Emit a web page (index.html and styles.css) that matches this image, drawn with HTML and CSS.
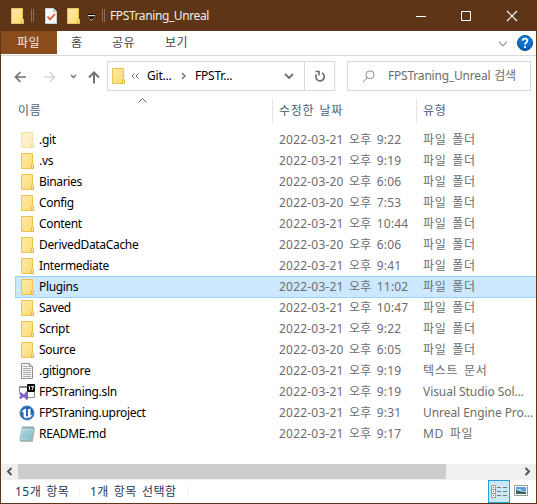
FILE: index.html
```html
<!DOCTYPE html>
<html lang="ko">
<head>
<meta charset="utf-8">
<title>FPSTraning_Unreal</title>
<link rel="stylesheet" href="styles.css">
</head>
<body>
<svg class="defs" width="0" height="0" aria-hidden="true">
  <defs>
    <linearGradient id="fg" x1="0" y1="0" x2="1" y2="1"><stop offset="0" stop-color="#ffeaa6"/><stop offset="1" stop-color="#fedb72"/></linearGradient>
    <linearGradient id="ng" x1="0" y1="0" x2="1" y2="1"><stop offset="0" stop-color="#d3eef3"/><stop offset="1" stop-color="#7fbccb"/></linearGradient>
    <linearGradient id="hg" x1="0" y1="0" x2="0" y2="1"><stop offset="0" stop-color="#1583e0"/><stop offset="1" stop-color="#0560bd"/></linearGradient>
    <symbol id="folder" viewBox="0 0 13 16">
      <path d="M.5.5h11v11h1v4H.5z" fill="url(#fg)" stroke="#eac44f"/>
      <path d="M10.500 15.500v-4l1-1 1 1v4z" fill="#ffe596" stroke="#e5b93c"/>
    </symbol>
  </defs>
</svg>
<div class="window">
  <header class="titlebar">
    <svg class="folder" width="13" height="16"><use href="#folder"/></svg>
    <i class="grip grip-a"></i>
    <svg class="check" width="12" height="16" viewBox="0 0 12 16"><path d="M.5.5h8l3 3v12H.5z" fill="#fafafa" stroke="#c9d3da"/><path d="M8.500.5v3h3" fill="#dde5ea" stroke="#b7c4cc"/><path d="M2.500 8.500l2.500 3 5-5.500" fill="none" stroke="#e2572b" stroke-width="1.800"/></svg>
    <svg class="folder qa" width="13" height="16"><use href="#folder"/></svg>
    <svg class="more" width="7" height="7" viewBox="0 0 7 7"><path d="M0 .5h7" stroke="#000"/><path d="M0 1.500h7" stroke="#e8ddd5"/><path d="M0 3h7L3.500 6.800z" fill="#e8ddd5"/><path d="M0 3h7L3.500 5.800z" fill="#000"/></svg>
    <i class="grip grip-b"></i>
    <span class="title">FPSTraning_Unreal</span>
    <svg class="controls" width="102" height="12" viewBox="0 0 102 12" fill="none" stroke="#fff"><path d="M0 6.500h10M45.500 1.500h9v9h-9z"/><path d="M91 1l10 10M101 1L91 11" stroke-width="1.200"/></svg>
  </header>
  <nav class="tabs">
    <span class="tab file">파일</span><span class="tab home">홈</span><span class="tab share">공유</span><span class="tab view">보기</span>
    <svg class="expand" width="10" height="6" viewBox="0 0 10 6"><path d="M1 .8l4 4 4-4" fill="none" stroke="#a0a0a0" stroke-width="1.300"/></svg>
    <svg class="help" width="16" height="16" viewBox="0 0 16 16"><circle cx="8" cy="8" r="7.500" fill="url(#hg)" stroke="#0b4c8c"/><path d="M5.600 5.700C5.700 2.800 10.500 2.900 10.300 5.800 10.200 7.500 8 7.600 8 9.700M8 11v2" fill="none" stroke="#fff" stroke-width="1.800"/></svg>
  </nav>
  <div class="navbar">
    <svg class="arrows" width="86" height="14" viewBox="0 0 86 14" fill="none" stroke="#727272" stroke-width="1.700"><path d="M12 7H1.500M6.500 2l-5 5 5 5"/><path d="M30 7h10.500M35.500 2l5 5-5 5" stroke="#d8d8d8"/><path d="M57 5l2.500 2.500L62 5" stroke-width="1.500"/><path d="M80 13.500V2.500M75 7.500l5-5 5 5" stroke-width="2"/></svg>
    <div class="address">
      <svg class="folder" width="13" height="16"><use href="#folder"/></svg>
      <svg class="dbl" width="8" height="6" viewBox="0 0 8 6"><path d="M3.500.5L1 3l2.500 2.500M7.500.5L5 3l2.500 2.500" fill="none" stroke="#666"/></svg>
      <span class="crumb git">Git...</span>
      <svg class="sep" width="5" height="8" viewBox="0 0 5 8"><path d="M1 1l3 3-3 3" fill="none" stroke="#777" stroke-width="1.500"/></svg>
      <span class="crumb">FPSTr...</span>
      <svg class="drop" width="10" height="7" viewBox="0 0 10 7"><path d="M1 1l4 4 4-4" fill="none" stroke="#707070" stroke-width="1.900"/></svg>
      <span class="refresh"><svg width="12" height="12" viewBox="0 0 12 12" fill="none" stroke="#6c6c6c" stroke-width="1.600"><path d="M8 3A4.200 4.200 0 1 1 2.500 4.500M1.500 1.500H5v4"/></svg></span>
    </div>
    <div class="search">
      <svg width="13" height="13" viewBox="0 0 13 13" fill="none" stroke="#8c8c8c"><circle cx="8" cy="4.800" r="4"/><path d="M5.200 7.700L.7 12.200"/></svg>
      <span>FPSTraning_Unreal 검색</span>
    </div>
  </div>
  <div class="columns">
    <span class="c-name">이름</span><span class="c-date">수정한 날짜</span><span class="c-type">유형</span>
    <svg class="sort" width="9" height="5" viewBox="0 0 9 5"><path d="M.5 4.500l4-4 4 4" fill="none" stroke="#666"/></svg>
  </div>
  <main class="files">
    <div class="row"><svg class="icon faded" viewBox="0 0 13 16"><use href="#folder"/></svg><span class="name">.git</span><span class="date">2022-03-21 오후 9:22</span><span class="type ko">파일 폴더</span></div>
    <div class="row"><svg class="icon" viewBox="0 0 13 16"><use href="#folder"/></svg><span class="name">.vs</span><span class="date">2022-03-21 오후 9:19</span><span class="type ko">파일 폴더</span></div>
    <div class="row"><svg class="icon" viewBox="0 0 13 16"><use href="#folder"/></svg><span class="name">Binaries</span><span class="date">2022-03-20 오후 6:06</span><span class="type ko">파일 폴더</span></div>
    <div class="row"><svg class="icon" viewBox="0 0 13 16"><use href="#folder"/></svg><span class="name">Config</span><span class="date">2022-03-20 오후 7:53</span><span class="type ko">파일 폴더</span></div>
    <div class="row"><svg class="icon" viewBox="0 0 13 16"><use href="#folder"/></svg><span class="name">Content</span><span class="date">2022-03-21 오후 10:44</span><span class="type ko">파일 폴더</span></div>
    <div class="row"><svg class="icon" viewBox="0 0 13 16"><use href="#folder"/></svg><span class="name">DerivedDataCache</span><span class="date">2022-03-20 오후 6:06</span><span class="type ko">파일 폴더</span></div>
    <div class="row"><svg class="icon" viewBox="0 0 13 16"><use href="#folder"/></svg><span class="name">Intermediate</span><span class="date">2022-03-21 오후 9:41</span><span class="type ko">파일 폴더</span></div>
    <div class="row selected"><svg class="icon" viewBox="0 0 13 16"><use href="#folder"/></svg><span class="name">Plugins</span><span class="date">2022-03-21 오후 11:02</span><span class="type ko">파일 폴더</span></div>
    <div class="row"><svg class="icon" viewBox="0 0 13 16"><use href="#folder"/></svg><span class="name">Saved</span><span class="date">2022-03-21 오후 10:47</span><span class="type ko">파일 폴더</span></div>
    <div class="row"><svg class="icon" viewBox="0 0 13 16"><use href="#folder"/></svg><span class="name">Script</span><span class="date">2022-03-21 오후 9:22</span><span class="type ko">파일 폴더</span></div>
    <div class="row"><svg class="icon" viewBox="0 0 13 16"><use href="#folder"/></svg><span class="name">Source</span><span class="date">2022-03-20 오후 6:05</span><span class="type ko">파일 폴더</span></div>
    <div class="row"><svg class="icon" viewBox="0 0 13 16"><path d="M.5.5h8l3 3v12H.5z" fill="#f7f7f7" stroke="#919191"/><path d="M8.500.5v3h3" fill="#ddd" stroke="#919191"/><path d="M2 3.500h5M2 5.500h8M2 7.500h8M2 9.500h8M2 11.500h8M2 13.500h8" stroke="#aaa"/></svg><span class="name">.gitignore</span><span class="date">2022-03-21 오후 9:19</span><span class="type ko">텍스트 문서</span></div>
    <div class="row"><svg class="icon wide" viewBox="0 0 16 16"><path d="M.5 8V2.500H8M15.500 8v5.500H9M1 3.500h7" fill="none" stroke="#8c8c8c"/><rect x="8" y="0" width="8" height="8" rx="1" fill="#050505"/><path d="M9.500 2.500h1V6M12 2.500h2.500L13 6" fill="none" stroke="#fff"/><path d="M0 9l1.500-1L5 10.500 7.500 7 9 8v7l-1.500 1L5 13l-3.500 2L0 14l1.500-2.500z" fill="#8661c5"/></svg><span class="name">FPSTraning.sln</span><span class="date">2022-03-21 오후 9:19</span><span class="type">Visual Studio Sol...</span></div>
    <div class="row"><svg class="icon wide" viewBox="0 0 16 16"><circle cx="8" cy="8" r="7.200" fill="#2466b0" stroke="#6e9fd2" stroke-width=".7"/><path d="M2.700 7.500C3.500 5.200 5.200 4 7 3.500v7q0 1 1 1t1-1V5L8.300 4.500 11.500 3.500v7l2-1.500C12.600 11.500 11.500 12.500 10 13L9 12.200 8 13.300C6.500 13.300 4.500 12.500 4.500 11V7q-.8-.4-1.800.5" fill="#fff"/></svg><span class="name">FPSTraning.uproject</span><span class="date">2022-03-21 오후 9:31</span><span class="type">Unreal Engine Pro...</span></div>
    <div class="row"><svg class="icon wide" viewBox="0 0 16 16"><path d="M13.500 2L15.500 3 13.500 15.500H2z" fill="#e2d6b5" stroke="#998f77" stroke-width=".6"/><path d="M3 1.500h12L12.500 14.500H.7z" fill="url(#ng)" stroke="#78a9b4" stroke-width=".6"/><path d="M3.500 5h9.500M3 7h9.500M2.800 9h9.300M2.500 11h9.300" stroke="#74aebd" stroke-width=".6"/><path d="M4 0v3M6 0v3M8 0v3M10 0v3M12 0v3M14 0v3" stroke="#7a8d92" stroke-width=".8"/></svg><span class="name">README.md</span><span class="date">2022-03-21 오후 9:17</span><span class="type ko">MD 파일</span></div>
  </main>
  <div class="scrollbar">
    <svg class="left" width="17" height="15" viewBox="0 0 17 15"><path d="M10.500 4L7 7.500l3.500 3.500" fill="none" stroke="#555" stroke-width="2"/></svg>
    <i class="thumb"></i>
    <svg class="right" width="17" height="15" viewBox="0 0 17 15"><path d="M6.500 4L10 7.500 6.500 11" fill="none" stroke="#555" stroke-width="2"/></svg>
  </div>
  <footer class="status">
    <span class="count">15개 항목</span><span class="picked">1개 항목 선택함</span>
    <span class="details"><svg width="16" height="13" viewBox="0 0 16 13" fill="none" stroke="#999"><path d="M.5.5h4v12h-4zM0 4.500h5M0 8.500h5" fill="#fff"/><path d="M6 2.500h4M12 2.500h4M6 6.500h4M12 6.500h4M6 10.500h4M12 10.500h4" stroke="#777"/><path d="M2 2.500h1" stroke="#555"/><path d="M2 6.500h1" stroke="#387abf"/><path d="M2 10.500h1" stroke="#d22"/></svg></span>
    <svg class="thumbs" width="14" height="11" viewBox="0 0 14 11"><path d="M.5.5h13v10H.5z" fill="#fff" stroke="#999"/><path d="M2 2h10v7H2z" fill="#5b9be8"/><path d="M2 5q3-2 5 0t5 1v1H2z" fill="#cfe6f5"/><path d="M2 5q3 0 5 1.500l5 .5v2H2z" fill="#38695b"/></svg>
  </footer>
</div>
</body>
</html>
```

FILE: styles.css
```css
* { box-sizing: border-box; }
body { margin: 0; background: #fff; font: 12px/20px "Noto Sans", "Noto Sans CJK KR", sans-serif; color: #000; overflow: hidden; }
svg { display: block; flex: none; }
span { white-space: nowrap; }
.defs { position: absolute; }
.window { width: 537px; height: 504px; border: solid #5f3517; border-width: 0 1px 1px; display: flex; flex-direction: column; }

.titlebar { height: 31px; margin: 0 -1px; flex: none; background: #5f3517; display: flex; align-items: center; padding: 0 19px 0 11px; color: #f4eeea; }
.grip { width: 3px; height: 13px; border: solid #8d705c; border-width: 0 1px; }
.grip-a { margin-left: 7px; }
.check { margin: 1px 0 0 11px; }
.qa { margin: 1px 0 0 10px; }
.more { margin: 3px 0 0 8px; }
.grip-b { margin-left: 7px; }
.title { margin-left: 5px; letter-spacing: -.4px; }
.controls { margin-left: auto; }

.tabs { height: 25px; flex: none; display: flex; border-bottom: 1px solid #dadada; color: #444; line-height: 23px; padding-right: 3px; letter-spacing: .5px; }
.tab { height: 23px; }
.file { width: 56px; padding-left: 16px; background: #8a4b1d; color: #f6eee8; }
.home { margin-left: 14px; width: 41px; }
.share { width: 53px; }
.expand { margin: 10px 9px 0 auto; }
.help { margin-top: 4px; }

.navbar { height: 40px; flex: none; display: flex; align-items: center; padding: 0 5px 0 13px; }
.arrows { margin-top: 1px; }
.address { width: 228px; height: 30px; margin-left: 7px; border: 1px solid #d9d9d9; display: flex; align-items: center; padding-left: 4px; }
.dbl { margin-left: 6px; }
.crumb { letter-spacing: -.2px; }
.git { margin-left: 8px; width: 34px; }
.sep { margin-right: 9px; }
.drop { margin-left: auto; margin-right: 10px; }
.refresh { width: 30px; height: 28px; border-left: 1px solid #d9d9d9; display: grid; place-items: center; }
.search { width: 184px; height: 30px; margin-left: 12px; border: 1px solid #d9d9d9; display: flex; align-items: center; padding-left: 14px; color: #6d6d6d; }
.search span { margin-left: 13px; letter-spacing: -.2px; word-spacing: 1px; }

.columns { height: 33px; flex: none; position: relative; display: flex; align-items: center; padding: 0 0 4px 17px; color: #4c607a; letter-spacing: .7px; word-spacing: 1.5px; }
.c-name { width: 254px; }
.c-date, .c-type { height: 25px; line-height: 25px; border-left: 1px solid #e5e5e5; padding-left: 6px; }
.c-date { width: 144px; }
.sort { position: absolute; left: 137px; top: 2px; }

.files { height: 335px; flex: none; padding-left: 14px; }
.row { height: 21px; display: grid; grid-template-columns: 24px 240px 144px 1fr; align-items: center; color: #6d6d6d; }
.row .icon { width: 13px; height: 16px; margin-left: 6px; }
.row .icon.wide { width: 16px; margin-left: 4px; }
.faded { opacity: .5; }
.name { color: #000; letter-spacing: -.33px; }
.date { letter-spacing: .2px; word-spacing: 2px; }
.type { letter-spacing: -.06px; }
.type.ko { letter-spacing: .7px; word-spacing: 2px; }
.selected { height: 22px; margin-bottom: -1px; background: #cce8ff; box-shadow: inset 1px 1px #99d1ff, inset 0 -1px #99d1ff; }

.scrollbar { height: 16px; flex: none; display: flex; background: #f0f0f0; }
.thumb { width: 428px; height: 15px; background: #cdcdcd; }
.right { margin-left: auto; }
.status { height: 23px; flex: none; display: flex; align-items: center; padding-left: 14px; color: #1e395b; letter-spacing: .45px; word-spacing: 1.5px; }
.count { width: 65px; border-right: 1px solid #f0f0f0; height: 11px; line-height: 11px; }
.picked { width: 108px; padding-left: 10px; border-right: 1px solid #f0f0f0; height: 11px; line-height: 11px; }
.details { width: 22px; height: 23px; margin-left: auto; border: 1px solid #26a0da; background: #cce8f7; display: grid; place-items: center; }
.thumbs { margin: -2px 8px 0 4px; }
```
